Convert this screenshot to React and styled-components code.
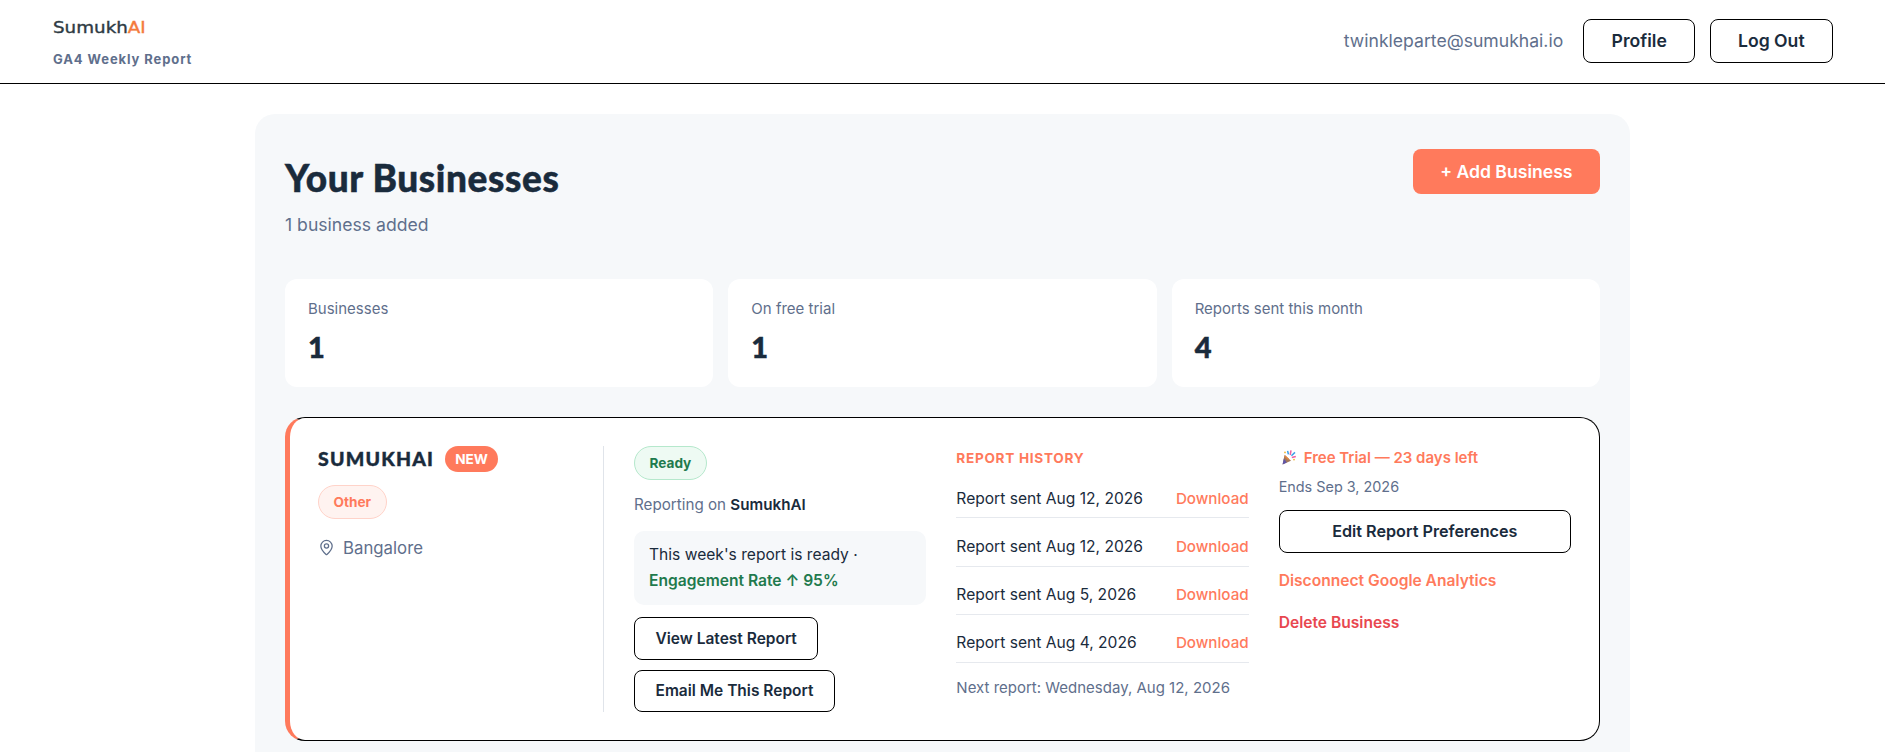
import * as React from 'react';
import styled, { createGlobalStyle } from 'styled-components';
import { MapPin } from 'lucide-react';

const INK = '#1a2b3c';
const SLATE = '#5f6f8c';
const CORAL = '#ff7a5c';
const SANS = '"Inter", "Liberation Sans", sans-serif';
const DISPLAY = '"Lato", "Inter", sans-serif';

const GlobalStyle = createGlobalStyle`
  html, body {
    margin: 0;
    padding: 0;
    background: #fff;
    color: ${INK};
    font-family: ${SANS};
  }
  body { overflow: hidden; height: 100vh; }
  * { box-sizing: border-box; }
`;

const Header = styled.header`
  display: flex;
  align-items: center;
  justify-content: space-between;
  height: 84px;
  padding: 0 52px 2px 53px;
  border-bottom: 1px solid #000;
`;

const Brand = styled.div`
  display: flex;
  flex-direction: column;
  align-items: flex-start;
  gap: 16px;
  margin-top: 7px;
`;

const Wordmark = styled.div`
  font-family: "DejaVu Sans", sans-serif;
  font-size: 15px;
  font-weight: 400;
  line-height: 14px;
  -webkit-text-stroke: 0.35px currentColor;
  color: #2e3b44;
  transform: scaleX(1.22);
  transform-origin: left center;

  span { color: #f47b3e; }
`;

const Tagline = styled.div`
  font-size: 13px;
  font-weight: 700;
  line-height: 16px;
  letter-spacing: 0.9px;
  color: ${SLATE};
`;

const UserNav = styled.nav`
  display: flex;
  align-items: center;
`;

const Email = styled.span`
  margin-right: 20px;
  font-size: 17.6px;
  color: ${SLATE};
`;

const OutlineButton = styled.button`
  display: ${(p) => (p.$block ? 'flex' : 'inline-flex')};
  align-items: center;
  justify-content: center;
  width: ${(p) => (p.$block ? '100%' : 'auto')};
  height: ${(p) => p.$height || 43}px;
  margin-left: ${(p) => p.$gap || 0}px;
  padding: 0 ${(p) => p.$pad || 20.5}px;
  background: #fff;
  border: 1px solid #000;
  border-radius: 8px;
  color: ${INK};
  font-family: ${SANS};
  font-size: ${(p) => p.$size || 15.5}px;
  font-weight: 600;
  cursor: pointer;
`;

const Main = styled.main`
  padding: 30px 255px 0;
`;

const Panel = styled.section`
  padding: 30px 30px 30px;
  background: #f6f8fa;
  border-radius: 20px;
`;

const PanelHead = styled.div`
  display: flex;
  align-items: flex-start;
  justify-content: space-between;
  margin-bottom: 42px;
`;

const Title = styled.h1`
  margin: 11px 0 0;
  font-family: ${DISPLAY};
  font-size: 37px;
  font-weight: 900;
  line-height: 46px;
  letter-spacing: 0.6px;
  -webkit-text-stroke: 0.5px currentColor;
  color: ${INK};
`;

const Subtitle = styled.p`
  margin: 11.6px 0 0;
  font-size: 17.6px;
  line-height: 24px;
  color: ${SLATE};
`;

const AddButton = styled.button`
  height: 45px;
  margin-top: 5px;
  padding: 0 27.5px;
  background: ${CORAL};
  border: 0;
  border-radius: 8px;
  color: #fff;
  font-family: ${SANS};
  font-size: 17.6px;
  font-weight: 600;
  cursor: pointer;
`;

const Stats = styled.div`
  display: grid;
  grid-template-columns: repeat(3, 1fr);
  gap: 15px;
  margin-bottom: 30px;
`;

const StatCard = styled.div`
  height: 108px;
  padding: 21px 23px;
  background: #fff;
  border-radius: 12px;
`;

const StatLabel = styled.div`
  font-size: 15px;
  line-height: 18px;
  color: ${SLATE};
`;

const StatValue = styled.div`
  margin-top: 12.4px;
  font-family: ${DISPLAY};
  font-size: 29px;
  font-weight: 900;
  line-height: 34px;
  -webkit-text-stroke: 0.5px currentColor;
  color: ${INK};
`;

const BusinessCard = styled.article`
  display: grid;
  grid-template-columns: 286px repeat(3, 1fr);
  gap: 30px;
  padding: 28px;
  height: 324px;
  background: #fff;
  border: 1px solid #000;
  border-left: 5px solid ${CORAL};
  border-radius: 20px;
`;

const IdentityCol = styled.div`
  border-right: 1px solid #e0e4ea;
`;

const NameRow = styled.div`
  display: flex;
  align-items: center;
  gap: 11px;
`;

const BusinessName = styled.h2`
  margin: 0;
  font-family: ${DISPLAY};
  font-size: 19.5px;
  font-weight: 900;
  line-height: 24px;
  letter-spacing: 1.2px;
  -webkit-text-stroke: 0.4px currentColor;
  color: ${INK};
`;

const NewBadge = styled.span`
  display: inline-flex;
  align-items: center;
  height: 26px;
  padding: 0 10px;
  background: ${CORAL};
  border-radius: 13px;
  color: #fff;
  font-size: 13.6px;
  font-weight: 700;
`;

const Pill = styled.span`
  display: inline-flex;
  align-items: center;
  height: 34px;
  padding: 0 14.5px;
  background: ${(p) => (p.$tone === 'green' ? '#eefaf3' : '#fff3f0')};
  border: 1px solid ${(p) => (p.$tone === 'green' ? '#b5e8cc' : '#ffd3c9')};
  border-radius: 17px;
  color: ${(p) => (p.$tone === 'green' ? '#1f7a4d' : CORAL)};
  font-size: 13.6px;
  font-weight: 700;
`;

const CategoryRow = styled.div`
  margin-top: 13px;
`;

const Location = styled.div`
  display: flex;
  align-items: center;
  gap: 8px;
  margin-top: 18px;
  font-size: 16.8px;
  line-height: 22px;
  color: ${SLATE};
`;

const Column = styled.div`
  display: flex;
  flex-direction: column;
  align-items: flex-start;
  min-width: 0;
`;

const ReportingOn = styled.div`
  margin-top: 15px;
  font-size: 15.2px;
  line-height: 20px;
  color: ${SLATE};

  strong {
    color: ${INK};
    font-weight: 600;
  }
`;

const StatusBox = styled.div`
  align-self: stretch;
  margin-top: 16px;
  padding: 11.5px 15px;
  background: #f6f8fa;
  border-radius: 10px;
  font-size: 15.6px;
  line-height: 25.6px;
  color: ${INK};

  strong {
    color: #1f7a4d;
    font-weight: 600;
  }
`;

const ButtonStack = styled.div`
  display: flex;
  flex-direction: column;
  align-items: flex-start;
  gap: 10px;
  margin-top: 12px;
`;

const SectionLabel = styled.div`
  margin-top: 4px;
  font-size: 13.6px;
  font-weight: 700;
  line-height: 16px;
  letter-spacing: 0.7px;
  color: ${CORAL};
`;

const HistoryList = styled.ul`
  align-self: stretch;
  margin: 4.4px 0 0;
  padding: 0;
  list-style: none;
`;

const HistoryRow = styled.li`
  display: flex;
  align-items: center;
  justify-content: space-between;
  height: 48.3px;
  padding-top: 8.8px;
  border-bottom: 1px solid #e6e9ee;
  font-size: 15.6px;
  color: ${INK};
`;

const DownloadLink = styled.a`
  color: ${CORAL};
  font-size: 15.2px;
  font-weight: 500;
  text-decoration: none;
`;

const NextReport = styled.div`
  margin-top: 15px;
  font-size: 15px;
  line-height: 20px;
  color: ${SLATE};
`;

const TrialLine = styled.div`
  display: flex;
  align-items: center;
  gap: 8px;
  margin-top: 4px;
  padding-left: 3px;
  font-size: 15px;
  font-weight: 600;
  line-height: 16px;
  color: ${CORAL};
`;

const TrialEnds = styled.div`
  margin-top: 11px;
  font-size: 14.4px;
  line-height: 20px;
  color: ${SLATE};
`;

const ActionLink = styled.a`
  margin-top: ${(p) => p.$top}px;
  color: ${(p) => (p.$danger ? '#e8474f' : CORAL)};
  font-size: 15.6px;
  font-weight: 600;
  line-height: 20px;
  text-decoration: none;
`;

const PrefsRow = styled.div`
  align-self: stretch;
  margin-top: 13px;
`;

const PartyPopper = () => (
  <svg width="14" height="15" viewBox="0 0 14 15" aria-hidden="true">
    <path d="M2.6 4.8 L9 10.8 L0.6 14.4 Z" fill="#a3785a" />
    <path d="M1.8 8.4 L4.8 12.6 L0.6 14.4 Z" fill="#5f55a8" />
    <path d="M2.8 6 L6.6 9.6" stroke="#e8843c" strokeWidth="1.4" />
    <path d="M5.6 0.8 L6.4 4.4" stroke="#3a9fe8" strokeWidth="1.5" />
    <path d="M9 0.4 L8.2 5" stroke="#ec5fa0" strokeWidth="1.5" />
    <path d="M13 2.4 L9.4 5.8" stroke="#3a9fe8" strokeWidth="1.5" />
    <path d="M13.8 6.4 L9.8 7.4" stroke="#ec5fa0" strokeWidth="1.5" />
    <circle cx="12" cy="9.6" r="0.9" fill="#f2b632" />
    <circle cx="3" cy="2.4" r="0.9" fill="#f2b632" />
  </svg>
);

const stats = [
  { label: 'Businesses', value: 1 },
  { label: 'On free trial', value: 1 },
  { label: 'Reports sent this month', value: 4 },
];

const history = ['Aug 12, 2026', 'Aug 12, 2026', 'Aug 5, 2026', 'Aug 4, 2026'];

const App = () => (
  <>
    <GlobalStyle />
    <Header>
      <Brand>
        <Wordmark>
          Sumukh<span>AI</span>
        </Wordmark>
        <Tagline>GA4 Weekly Report</Tagline>
      </Brand>
      <UserNav>
        <Email>twinkleparte@sumukhai.io</Email>
        <OutlineButton $height={44} $size={17.6} $pad={27.4}>
          Profile
        </OutlineButton>
        <OutlineButton $height={44} $size={17.6} $pad={27.4} $gap={14.4}>
          Log Out
        </OutlineButton>
      </UserNav>
    </Header>
    <Main>
      <Panel>
        <PanelHead>
          <div>
            <Title>Your Businesses</Title>
            <Subtitle>1 business added</Subtitle>
          </div>
          <AddButton>+ Add Business</AddButton>
        </PanelHead>
        <Stats>
          {stats.map((s) => (
            <StatCard key={s.label}>
              <StatLabel>{s.label}</StatLabel>
              <StatValue>{s.value}</StatValue>
            </StatCard>
          ))}
        </Stats>
        <BusinessCard>
          <IdentityCol>
            <NameRow>
              <BusinessName>SUMUKHAI</BusinessName>
              <NewBadge>NEW</NewBadge>
            </NameRow>
            <CategoryRow>
              <Pill>Other</Pill>
            </CategoryRow>
            <Location>
              <MapPin size={17} strokeWidth={1.8} />
              Bangalore
            </Location>
          </IdentityCol>
          <Column>
            <Pill $tone="green">Ready</Pill>
            <ReportingOn>
              Reporting on <strong>SumukhAI</strong>
            </ReportingOn>
            <StatusBox>
              This week's report is ready ·
              <br />
              <strong>Engagement Rate ↑ 95%</strong>
            </StatusBox>
            <ButtonStack>
              <OutlineButton>View Latest Report</OutlineButton>
              <OutlineButton $height={42}>Email Me This Report</OutlineButton>
            </ButtonStack>
          </Column>
          <Column>
            <SectionLabel>REPORT HISTORY</SectionLabel>
            <HistoryList>
              {history.map((date, i) => (
                <HistoryRow key={i}>
                  Report sent {date}
                  <DownloadLink href="#">Download</DownloadLink>
                </HistoryRow>
              ))}
            </HistoryList>
            <NextReport>Next report: Wednesday, Aug 12, 2026</NextReport>
          </Column>
          <Column>
            <TrialLine>
              <PartyPopper />
              Free Trial — 23 days left
            </TrialLine>
            <TrialEnds>Ends Sep 3, 2026</TrialEnds>
            <PrefsRow>
              <OutlineButton $block $size={16.2}>
                Edit Report Preferences
              </OutlineButton>
            </PrefsRow>
            <ActionLink href="#" $top={18}>
              Disconnect Google Analytics
            </ActionLink>
            <ActionLink href="#" $top={22} $danger>
              Delete Business
            </ActionLink>
          </Column>
        </BusinessCard>
      </Panel>
    </Main>
  </>
);

export default App;
